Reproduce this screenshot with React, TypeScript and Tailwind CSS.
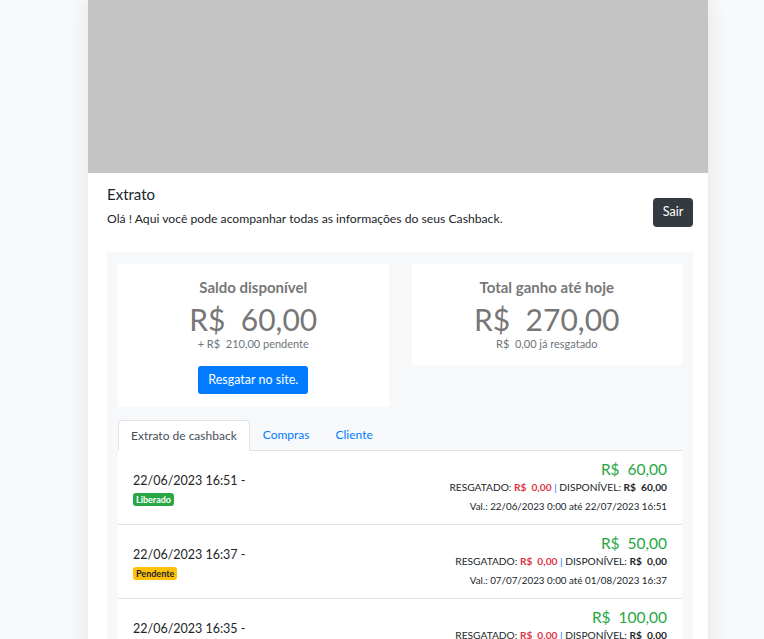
import React from 'react';

type Item = {
  date: string;
  status: 'Liberado' | 'Pendente';
  amount: string;
  resgatado: string;
  disponivel: string;
  validade: string;
};

const items: Item[] = [
  {
    date: '22/06/2023 16:51 -',
    status: 'Liberado',
    amount: '60,00',
    resgatado: '0,00',
    disponivel: '60,00',
    validade: 'Val.: 22/06/2023 0:00 até 22/07/2023 16:51',
  },
  {
    date: '22/06/2023 16:37 -',
    status: 'Pendente',
    amount: '50,00',
    resgatado: '0,00',
    disponivel: '0,00',
    validade: 'Val.: 07/07/2023 0:00 até 01/08/2023 16:37',
  },
  {
    date: '22/06/2023 16:35 -',
    status: 'Pendente',
    amount: '100,00',
    resgatado: '0,00',
    disponivel: '0,00',
    validade: 'Val.: 07/07/2023 0:00 até 01/08/2023 16:35',
  },
];

const App: React.FC = () => {
  return (
    <div
      className="h-[639px] w-full overflow-hidden bg-[#f8f9fa] text-[#212529]"
      style={{ fontFamily: 'Lato, "Noto Sans", sans-serif' }}
    >
      <div className="ml-[88px] w-[620px] bg-white shadow-[0_0_22px_rgba(0,0,0,0.09)]">
        {/* Banner placeholder */}
        <div className="h-[173px] bg-[#c4c4c4]" />

        <div className="pl-[19px] pr-[15px] pt-[12px] pb-[20px]">
          {/* Header */}
          <div className="flex items-end justify-between">
            <div>
              <h5 className="text-[15px] leading-[18px] text-[#212529]">Extrato</h5>
              <p className="mt-[8px] text-[12.2px] leading-[16px]">
                Olá ! Aqui você pode acompanhar todas as informações do seus Cashback.
              </p>
            </div>
            <button className="h-[29px] w-[40px] rounded-[4px] bg-[#343a40] text-[12.5px] text-white">
              Sair
            </button>
          </div>

          {/* Gray area */}
          <div className="mt-[25px] bg-[#f7f8fa] px-[11px] pt-[12px]">
            <div className="grid grid-cols-2 items-start gap-[23px]">
              <div className="flex flex-col items-center rounded-[2px] bg-white pt-[13px] pb-[13px]">
                <div className="text-[15px] leading-[20px] font-bold text-[#777]">Saldo disponível</div>
                <div className="mt-[4px] text-[30px] leading-[36px] text-[#777]">R$&nbsp;&nbsp;60,00</div>
                <div className="text-[11px] leading-[14px] text-[#6c757d]">+ R$&nbsp;&nbsp;210,00 pendente</div>
                <button className="mt-[15px] h-[28px] rounded-[3px] bg-[#007bff] px-[10px] text-[12.5px] text-white">
                  Resgatar no site.
                </button>
              </div>
              <div className="flex flex-col items-center rounded-[2px] bg-white pt-[13px] pb-[14px]">
                <div className="text-[15px] leading-[20px] font-bold text-[#777]">Total ganho até hoje</div>
                <div className="mt-[4px] text-[30px] leading-[36px] text-[#777]">R$&nbsp;&nbsp;270,00</div>
                <div className="text-[11px] leading-[14px] text-[#6c757d]">R$&nbsp;&nbsp;0,00 já resgatado</div>
              </div>
            </div>

            {/* Tabs */}
            <div className="mt-[13px] flex border-b border-[#dee2e6] text-[12px]">
              <div className="-mb-px rounded-t-[4px] border border-[#dee2e6] border-b-white bg-white px-[12px] py-[7px] leading-[15px] text-[#495057]">
                Extrato de cashback
              </div>
              <div className="px-[13px] py-[7px] leading-[15px] text-[#007bff]">Compras</div>
              <div className="px-[13px] py-[7px] leading-[15px] text-[#007bff]">Cliente</div>
            </div>

            {/* List */}
            <div className="bg-white">
              {items.map((it) => (
                <div
                  key={it.date}
                  className="flex h-[74px] items-center justify-between border-b border-[#dee2e6] px-[15px]"
                >
                  <div className="flex flex-col items-start gap-[4px] pt-[4px]">
                    <div className="text-[12.5px] leading-[16px]">{it.date}</div>
                    <span
                      className={
                        it.status === 'Liberado'
                          ? 'rounded-[3px] bg-[#28a745] px-[3px] text-[9px] leading-[13px] font-bold text-white'
                          : 'rounded-[3px] bg-[#ffc107] px-[3px] text-[9px] leading-[13px] font-bold text-[#212529]'
                      }
                    >
                      {it.status}
                    </span>
                  </div>
                  <div className="flex flex-col items-end">
                    <div className="-mt-[2px] text-[15.5px] leading-[20px] text-[#28a745]">R$&nbsp;&nbsp;{it.amount}</div>
                    <div className="text-[10.2px] leading-[16px]">
                      RESGATADO: <b className="text-[#dc3545]">R$&nbsp;&nbsp;{it.resgatado}</b>{' '}
                      <span className="text-[#007bff]">|</span> DISPONÍVEL: <b>R$&nbsp;&nbsp;{it.disponivel}</b>
                    </div>
                    <div className="mt-[3px] text-[9.8px] leading-[16px]">{it.validade}</div>
                  </div>
                </div>
              ))}
            </div>
          </div>
        </div>
      </div>
    </div>
  );
};

export default App;
